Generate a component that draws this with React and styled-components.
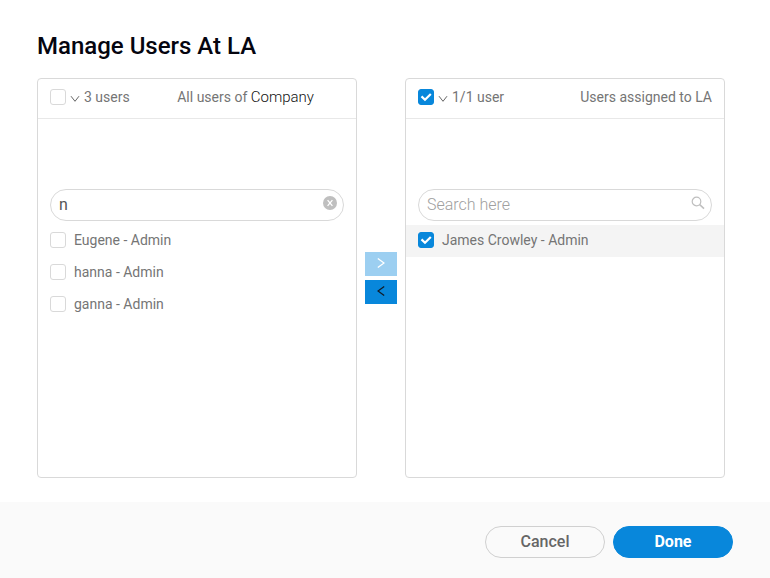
import React, { useState } from "react";
import styled, { createGlobalStyle } from "styled-components";

const GlobalStyle = createGlobalStyle`
  *, *::before, *::after { box-sizing: border-box; }
  html, body, #root { height: 100%; }
  body {
    margin: 0;
    background: #fff;
    color: #757575;
    font: 400 14px/20px Roboto, "Liberation Sans", sans-serif;
  }
  button, input { font: inherit; }
`;

const Dialog = styled.div`
  display: flex;
  flex-direction: column;
  min-height: 100%;
`;

const Content = styled.main`
  flex: 1;
  display: flex;
  flex-direction: column;
  padding: 30px 45px 24px 37px;
`;

const Title = styled.h1`
  margin: 0 0 16px;
  color: #05050f;
  font-size: 24px;
  line-height: 32px;
  font-weight: 500;
`;

const Transfer = styled.div`
  flex: 1;
  display: flex;
  align-items: stretch;
`;

const Panel = styled.section`
  flex: 1;
  min-width: 0;
  border: 1px solid #d9d9d9;
  border-radius: 4px;
`;

const PanelHeader = styled.header`
  display: flex;
  align-items: center;
  height: 40px;
  padding: 0 12px 3px;
  border-bottom: 1px solid #e8e8e8;
`;

const MenuButton = styled.button`
  display: flex;
  padding: 0;
  margin: 4px 4px 0;
  border: 0;
  background: none;
  color: #666;
  cursor: pointer;
`;

const PanelTitle = styled.h2`
  margin: 0 ${(p) => (p.$inset ? "30px" : "0")} 0 auto;
  font-size: 14px;
  line-height: 20px;
  font-weight: 400;
`;

const Company = styled.span`
  color: #111;
  font-size: 15px;
  font-weight: 300;
`;

const Search = styled.div`
  display: flex;
  align-items: center;
  height: 32px;
  margin: 70px 12px 4px;
  padding: 0 6px 0 8px;
  border: 1px solid #d9d9d9;
  border-radius: 16px;
`;

const SearchInput = styled.input`
  flex: 1;
  min-width: 0;
  height: 30px;
  padding: 0 0 2px;
  border: 0;
  outline: 0;
  background: none;
  color: #555;
  font-size: 16px;
  &::placeholder { color: #a0a0a0; font-weight: 300; opacity: 1; }
`;

const SearchAction = styled.button`
  display: flex;
  padding: 0 0 4px;
  border: 0;
  background: none;
  color: #bfbfbf;
`;

const List = styled.ul`
  margin: 0;
  padding: 0;
  list-style: none;
`;

const Row = styled.label`
  display: flex;
  align-items: center;
  gap: 8px;
  height: 32px;
  padding: 0 12px 2px;
  background: ${(p) => (p.$selected ? "#f4f4f4" : "transparent")};
  cursor: pointer;
`;

const CheckFrame = styled.span`
  display: grid;
  place-items: center;
  flex: none;
  width: 16px;
  height: 16px;
  & > * { grid-area: 1 / 1; }
  & > svg { pointer-events: none; }
`;

const CheckInput = styled.input`
  appearance: none;
  width: 16px;
  height: 16px;
  margin: 0;
  border: 1px solid #d9d9d9;
  border-radius: 3px;
  background: #fff;
  &:checked { border-color: #0887db; background: #0887db; }
`;

const Moves = styled.div`
  display: flex;
  flex-direction: column;
  justify-content: center;
  gap: 4px;
  padding: 0 8px;
`;

const MoveButton = styled.button`
  display: grid;
  place-items: center;
  width: 32px;
  height: 24px;
  padding: 0 0 2px;
  border: 0;
  background: #0887db;
  color: #111c28;
  &:disabled { background: #9ccff1; color: #fff; }
`;

const Footer = styled.footer`
  display: flex;
  justify-content: flex-end;
  gap: 8px;
  padding: 24px 37px 20px;
  background: #fafafa;
`;

const ActionButton = styled.button`
  width: 120px;
  height: 32px;
  padding: 0;
  border: 1px solid ${(p) => (p.$primary ? "#0887db" : "#d0d0d0")};
  border-radius: 16px;
  background: ${(p) => (p.$primary ? "#0887db" : "transparent")};
  color: ${(p) => (p.$primary ? "#fff" : "#666")};
  font-size: 16px;
  line-height: 20px;
  font-weight: ${(p) => (p.$primary ? 700 : 500)};
`;

function Checkbox({ checked, onChange, label }) {
  return (
    <CheckFrame>
      <CheckInput type="checkbox" checked={checked} onChange={onChange} aria-label={label} />
      {checked && (
        <svg width="16" height="16" viewBox="0 0 16 16" fill="none" aria-hidden="true">
          <path d="M3.5 7.4 7 10.8 12.8 5" stroke="#fff" strokeWidth="2.2" />
        </svg>
      )}
    </CheckFrame>
  );
}

function SelectionMenu() {
  return (
    <MenuButton type="button" aria-label="Selection options">
      <svg width="10" height="8" viewBox="0 0 10 8" fill="none" stroke="currentColor" aria-hidden="true">
        <path d="M1 1.2 5 6.3 9 1.2" />
      </svg>
    </MenuButton>
  );
}

function SearchBox({ value, onChange }) {
  return (
    <Search>
      <SearchInput
        value={value}
        onChange={(e) => onChange(e.target.value)}
        placeholder="Search here"
        aria-label="Search users"
      />
      {value ? (
        <SearchAction type="button" aria-label="Clear search" onClick={() => onChange("")}>
          <svg width="14" height="14" viewBox="0 0 14 14" aria-hidden="true">
            <circle cx="7" cy="7" r="7" fill="currentColor" />
            <path d="m4.6 4.2 4.8 5.6M9.4 4.2 4.6 9.8" stroke="#fff" strokeWidth="1.3" />
          </svg>
        </SearchAction>
      ) : (
        <SearchAction type="button" aria-label="Search">
          <svg width="14" height="14" viewBox="0 0 14 14" fill="none" stroke="currentColor" aria-hidden="true">
            <circle cx="5.5" cy="5.5" r="4.3" strokeWidth="1.2" />
            <path d="m8.7 8.7 4.3 4" strokeWidth="1.6" />
          </svg>
        </SearchAction>
      )}
    </Search>
  );
}

function UserPanel({ count, title, inset, users, selected, onSelect, query, onQuery }) {
  const all = users.length > 0 && users.every((u) => selected.includes(u));
  const toggle = (u) =>
    onSelect(selected.includes(u) ? selected.filter((s) => s !== u) : [...selected, u]);
  return (
    <Panel>
      <PanelHeader>
        <Checkbox checked={all} onChange={() => onSelect(all ? [] : users)} label="Select all" />
        <SelectionMenu />
        <span>{count}</span>
        <PanelTitle $inset={inset}>{title}</PanelTitle>
      </PanelHeader>
      <SearchBox value={query} onChange={onQuery} />
      <List>
        {users.map((u) => (
          <li key={u}>
            <Row $selected={selected.includes(u)}>
              <Checkbox checked={selected.includes(u)} onChange={() => toggle(u)} label={u} />
              <span>{u}</span>
            </Row>
          </li>
        ))}
      </List>
    </Panel>
  );
}

const COMPANY_USERS = ["Eugene - Admin", "hanna - Admin", "ganna - Admin"];
const ASSIGNED_USERS = ["James Crowley - Admin"];

export default function App() {
  const [left, setLeft] = useState([]);
  const [right, setRight] = useState(ASSIGNED_USERS);
  const [leftQuery, setLeftQuery] = useState("n");
  const [rightQuery, setRightQuery] = useState("");
  return (
    <>
      <GlobalStyle />
      <Dialog>
        <Content>
          <Title>Manage Users At LA</Title>
          <Transfer>
            <UserPanel
              count="3 users"
              title={<>All users of <Company>Company</Company></>}
              inset
              users={COMPANY_USERS}
              selected={left}
              onSelect={setLeft}
              query={leftQuery}
              onQuery={setLeftQuery}
            />
            <Moves>
              <MoveButton type="button" disabled={left.length === 0} aria-label="Assign selected">
                <svg width="8" height="10" viewBox="0 0 8 10" fill="none" stroke="currentColor" strokeWidth="1.3" aria-hidden="true">
                  <path d="M.8.5 7 5 .8 9.5" />
                </svg>
              </MoveButton>
              <MoveButton type="button" disabled={right.length === 0} aria-label="Remove selected">
                <svg width="8" height="10" viewBox="0 0 8 10" fill="none" stroke="currentColor" strokeWidth="1.3" aria-hidden="true">
                  <path d="M7.2.5 1 5l6.2 4.5" />
                </svg>
              </MoveButton>
            </Moves>
            <UserPanel
              count="1/1 user"
              title="Users assigned to LA"
              users={ASSIGNED_USERS}
              selected={right}
              onSelect={setRight}
              query={rightQuery}
              onQuery={setRightQuery}
            />
          </Transfer>
        </Content>
        <Footer>
          <ActionButton type="button">Cancel</ActionButton>
          <ActionButton type="button" $primary>Done</ActionButton>
        </Footer>
      </Dialog>
    </>
  );
}
